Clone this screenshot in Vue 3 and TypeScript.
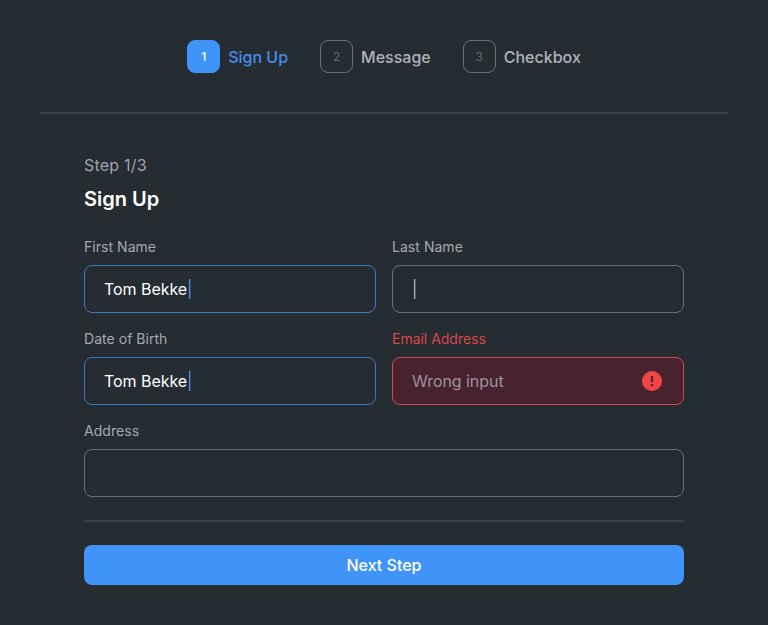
<script setup lang="ts">
interface Step {
  id: number
  label: string
  active: boolean
}

interface Field {
  id: string
  label: string
  text: string
  state: 'filled' | 'idle' | 'error'
  caret: boolean
  wide?: boolean
}

const steps: Step[] = [
  { id: 1, label: 'Sign Up', active: true },
  { id: 2, label: 'Message', active: false },
  { id: 3, label: 'Checkbox', active: false },
]

const fields: Field[] = [
  { id: 'first', label: 'First Name', text: 'Tom Bekke', state: 'filled', caret: true },
  { id: 'last', label: 'Last Name', text: '', state: 'idle', caret: true },
  { id: 'birth', label: 'Date of Birth', text: 'Tom Bekke', state: 'filled', caret: true },
  { id: 'email', label: 'Email Address', text: 'Wrong input', state: 'error', caret: false },
  { id: 'address', label: 'Address', text: '', state: 'idle', caret: false, wide: true },
]
</script>

<template>
  <main class="page">
    <nav class="steps">
      <div v-for="step in steps" :key="step.id" class="step" :class="{ active: step.active }">
        <span class="badge">{{ step.id }}</span>
        <span class="step-label">{{ step.label }}</span>
      </div>
    </nav>

    <section class="form">
      <p class="progress">Step 1/3</p>
      <h1 class="title">Sign Up</h1>

      <div class="fields">
        <div
          v-for="field in fields"
          :key="field.id"
          class="field"
          :class="[field.state, { wide: field.wide }]"
        >
          <span class="label">{{ field.label }}</span>
          <div class="control">
            <span v-if="field.text" class="value">{{ field.text }}</span>
            <svg v-if="field.caret" class="caret" viewBox="0 0 2 20" width="2" height="20">
              <rect width="1.3" height="20" fill="currentColor" />
            </svg>
            <svg v-if="field.state === 'error'" class="alert" viewBox="0 0 20 20" width="20" height="20">
              <circle cx="10" cy="10" r="10" fill="#f04545" />
              <path d="M10 5v6" stroke="#48232f" stroke-width="1.9" />
              <circle cx="10" cy="14" r="1.2" fill="#48232f" />
            </svg>
          </div>
        </div>
      </div>

      <div class="actions">
        <button class="next" type="button">Next Step</button>
      </div>
    </section>
  </main>
</template>

<style>
body {
  background: #252c32;
}
</style>

<style scoped>
.page {
  box-sizing: border-box;
  min-height: 625px;
  padding: 40px;
  background: #252c32;
  color: #b0b5bc;
  font-family: Inter, sans-serif;
  font-size: 16px;
  line-height: 24px;
}

.steps {
  display: flex;
  justify-content: center;
  gap: 32px;
  padding-bottom: 39px;
  border-bottom: 2px solid #3b4248;
}

.step {
  display: flex;
  align-items: center;
  gap: 8px;
  font-weight: 500;
}

.badge {
  box-sizing: border-box;
  display: flex;
  align-items: center;
  justify-content: center;
  width: 33px;
  height: 33px;
  border: 1px solid #6b7178;
  border-radius: 8px;
  color: #656b72;
  font-size: 12px;
  font-weight: 400;
}

.active .badge {
  border-color: #4094f7;
  background: #4094f7;
  color: #fff;
  font-weight: 500;
}

.active .step-label {
  color: #4490ea;
}

.form {
  margin: 39px 44px 0;
}

.progress {
  margin: 0;
  color: #9ea4ab;
  letter-spacing: 0.2px;
}

.title {
  margin: 8px 0 24px;
  color: #fff;
  font-size: 20px;
  font-weight: 600;
  line-height: 28px;
}

.fields {
  display: grid;
  grid-template-columns: 1fr 1fr;
  gap: 16px;
}

.field {
  display: flex;
  flex-direction: column;
  gap: 8px;
}

.wide {
  grid-column: 1 / -1;
}

.label {
  font-size: 14px;
  line-height: 20px;
  letter-spacing: 0.04px;
  color: #a4aab1;
}

.control {
  box-sizing: border-box;
  display: flex;
  align-items: center;
  height: 48px;
  padding: 0 21px 0 19px;
  border: 1px solid #6b7178;
  border-radius: 8px;
}

.value {
  letter-spacing: -0.05px;
}

.filled .control {
  border-color: #3d78c3;
}

.filled .value {
  color: #fff;
}

.caret {
  flex: none;
  margin-left: 2px;
  color: #b0b5bc;
}

.filled .caret {
  margin-left: 1.5px;
  color: #4094f7;
}

.error .label {
  color: #d94848;
  letter-spacing: -0.02px;
}

.error .control {
  border-color: #d04c4f;
  background: #48232f;
}

.error .value {
  color: #9b939b;
}

.alert {
  margin-left: auto;
}

.actions {
  margin-top: 23px;
  padding-top: 23px;
  border-top: 2px solid #3b4248;
}

.next {
  display: block;
  width: 100%;
  height: 40px;
  padding: 0;
  border: 0;
  border-radius: 8px;
  background: #4094f7;
  color: #fff;
  font: 500 16px/24px Inter, sans-serif;
}
</style>
